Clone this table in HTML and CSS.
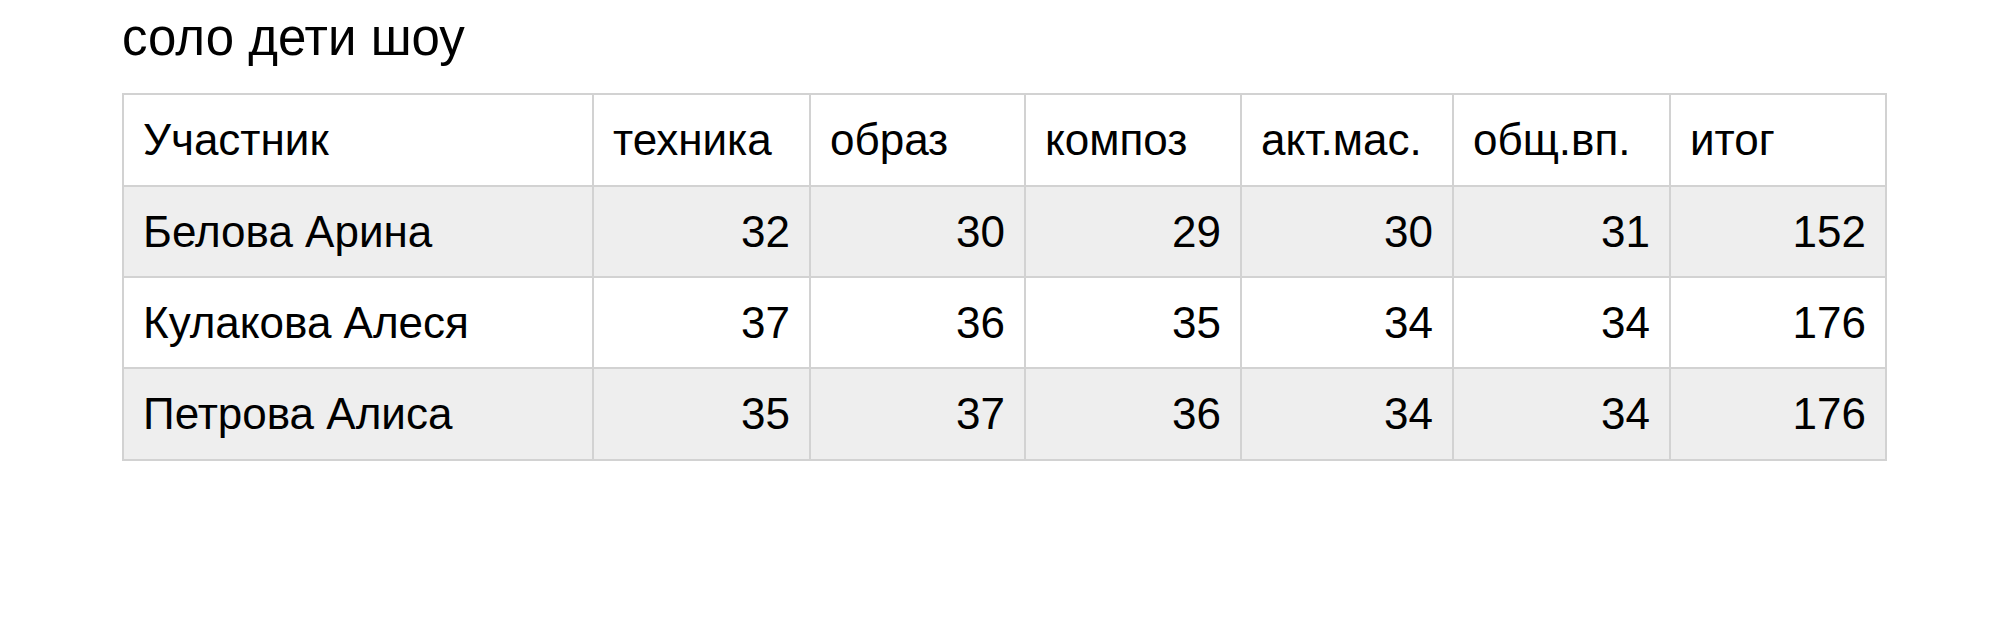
FILE: index.html
```html
<!DOCTYPE html>
<html lang="ru">
<head>
<meta charset="utf-8">
<title>соло дети шоу</title>
<link rel="stylesheet" href="styles.css">
</head>
<body>
<div class="page">
  <h1 class="title">соло дети шоу</h1>
  <table class="scores">
    <colgroup>
      <col class="c-name">
      <col class="c-tech">
      <col class="c-obraz">
      <col class="c-komp">
      <col class="c-akt">
      <col class="c-obsh">
      <col class="c-itog">
    </colgroup>
    <thead>
      <tr>
        <th>Участник</th>
        <th>техника</th>
        <th>образ</th>
        <th>композ</th>
        <th>акт.мас.</th>
        <th>общ.вп.</th>
        <th>итог</th>
      </tr>
    </thead>
    <tbody>
      <tr class="shade">
        <td class="name">Белова Арина</td>
        <td>32</td><td>30</td><td>29</td><td>30</td><td>31</td><td>152</td>
      </tr>
      <tr>
        <td class="name">Кулакова Алеся</td>
        <td>37</td><td>36</td><td>35</td><td>34</td><td>34</td><td>176</td>
      </tr>
      <tr class="shade">
        <td class="name">Петрова Алиса</td>
        <td>35</td><td>37</td><td>36</td><td>34</td><td>34</td><td>176</td>
      </tr>
    </tbody>
  </table>
</div>
</body>
</html>
```
FILE: styles.css
```css
html, body {
  margin: 0;
  padding: 0;
  background: #fff;
}
body {
  font-family: "Liberation Sans", Arial, sans-serif;
  color: #000;
}
.page {
  padding: 10px 0 0 122px;
}
.title {
  margin: 0 0 27px 0;
  font-size: 51px;
  font-weight: normal;
  line-height: 56px;
  height: 56px;
}
.scores {
  border-collapse: collapse;
  width: 1763px;
  table-layout: fixed;
  font-size: 44px;
}
.c-name { width: 470px; }
.c-tech { width: 217px; }
.c-obraz { width: 215px; }
.c-komp { width: 216px; }
.c-akt { width: 212px; }
.c-obsh { width: 217px; }
.c-itog { width: 216px; }
.scores th,
.scores td {
  border: 2px solid #d2d2d2;
  height: 89px;
  padding: 0 19px;
  vertical-align: middle;
  white-space: nowrap;
}
.scores th {
  height: 90px;
  font-weight: normal;
  text-align: left;
}
.scores tbody tr:last-child td {
  height: 90px;
}
.scores td {
  text-align: right;
}
.scores td.name {
  text-align: left;
}
.scores tr.shade td {
  background: #eeeeee;
}
```
